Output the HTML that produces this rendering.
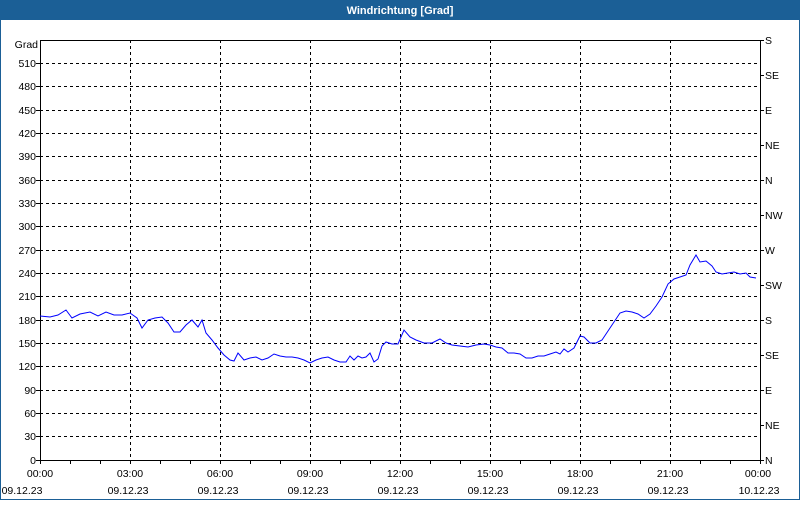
<!DOCTYPE html>
<html><head><style>
body{margin:0;width:800px;height:500px;overflow:hidden;background:#fff;font-family:"Liberation Sans",sans-serif}
</style></head><body>
<svg width="800" height="500" xmlns="http://www.w3.org/2000/svg" font-family="Liberation Sans, sans-serif" font-size="10.5">
<rect x="0" y="0" width="800" height="500" fill="#fff"/>
<rect x="0.5" y="0.5" width="799" height="499" fill="none" stroke="#1b5f96"/>
<rect x="0" y="0" width="800" height="20" fill="#1b5f96"/>
<text x="400" y="14" text-anchor="middle" fill="#fff" font-weight="bold" font-size="11">Windrichtung [Grad]</text>
<g stroke="#000" stroke-dasharray="3,3" stroke-width="1">
<line x1="40" x2="760" y1="63.5" y2="63.5"/><line x1="40" x2="760" y1="86.5" y2="86.5"/><line x1="40" x2="760" y1="110.5" y2="110.5"/><line x1="40" x2="760" y1="133.5" y2="133.5"/><line x1="40" x2="760" y1="156.5" y2="156.5"/><line x1="40" x2="760" y1="180.5" y2="180.5"/><line x1="40" x2="760" y1="203.5" y2="203.5"/><line x1="40" x2="760" y1="226.5" y2="226.5"/><line x1="40" x2="760" y1="250.5" y2="250.5"/><line x1="40" x2="760" y1="273.5" y2="273.5"/><line x1="40" x2="760" y1="296.5" y2="296.5"/><line x1="40" x2="760" y1="320.5" y2="320.5"/><line x1="40" x2="760" y1="343.5" y2="343.5"/><line x1="40" x2="760" y1="366.5" y2="366.5"/><line x1="40" x2="760" y1="390.5" y2="390.5"/><line x1="40" x2="760" y1="413.5" y2="413.5"/><line x1="40" x2="760" y1="436.5" y2="436.5"/>
<line y1="40" y2="460" x1="130.5" x2="130.5"/><line y1="40" y2="460" x1="220.5" x2="220.5"/><line y1="40" y2="460" x1="310.5" x2="310.5"/><line y1="40" y2="460" x1="400.5" x2="400.5"/><line y1="40" y2="460" x1="490.5" x2="490.5"/><line y1="40" y2="460" x1="580.5" x2="580.5"/><line y1="40" y2="460" x1="670.5" x2="670.5"/>
</g>
<rect x="40.5" y="40.5" width="720" height="420" fill="none" stroke="#000"/>
<g stroke="#000">
<path d="M40.5 460v4M70.5 460v4M100.5 460v4M130.5 460v4M160.5 460v4M190.5 460v4M220.5 460v4M250.5 460v4M280.5 460v4M310.5 460v4M340.5 460v4M370.5 460v4M400.5 460v4M430.5 460v4M460.5 460v4M490.5 460v4M520.5 460v4M550.5 460v4M580.5 460v4M610.5 460v4M640.5 460v4M670.5 460v4M700.5 460v4M730.5 460v4M760.5 460v4"/>
<path d="M36 63.5h4M36 86.5h4M36 110.5h4M36 133.5h4M36 156.5h4M36 180.5h4M36 203.5h4M36 226.5h4M36 250.5h4M36 273.5h4M36 296.5h4M36 320.5h4M36 343.5h4M36 366.5h4M36 390.5h4M36 413.5h4M36 436.5h4M36 460.5h4"/>
<path d="M760 40.5h4M760 75.5h4M760 110.5h4M760 145.5h4M760 180.5h4M760 215.5h4M760 250.5h4M760 285.5h4M760 320.5h4M760 355.5h4M760 390.5h4M760 425.5h4M760 460.5h4"/>
</g>
<g text-anchor="end">
<text x="38" y="48">Grad</text>
<text x="36" y="67">510</text><text x="36" y="90">480</text><text x="36" y="114">450</text><text x="36" y="137">420</text><text x="36" y="160">390</text><text x="36" y="184">360</text><text x="36" y="207">330</text><text x="36" y="230">300</text><text x="36" y="254">270</text><text x="36" y="277">240</text><text x="36" y="300">210</text><text x="36" y="324">180</text><text x="36" y="347">150</text><text x="36" y="370">120</text><text x="36" y="394">90</text><text x="36" y="417">60</text><text x="36" y="440">30</text><text x="36" y="464">0</text>
</g>
<g>
<text x="765" y="44">S</text><text x="765" y="79">SE</text><text x="765" y="114">E</text><text x="765" y="149">NE</text><text x="765" y="184">N</text><text x="765" y="219">NW</text><text x="765" y="254">W</text><text x="765" y="289">SW</text><text x="765" y="324">S</text><text x="765" y="359">SE</text><text x="765" y="394">E</text><text x="765" y="429">NE</text><text x="765" y="464">N</text>
</g>
<g text-anchor="middle">
<text x="40" y="477">00:00</text><text x="130" y="477">03:00</text><text x="220" y="477">06:00</text><text x="310" y="477">09:00</text><text x="400" y="477">12:00</text><text x="490" y="477">15:00</text><text x="580" y="477">18:00</text><text x="670" y="477">21:00</text><text x="758" y="477">00:00</text>
<text x="22" y="494">09.12.23</text><text x="128" y="494">09.12.23</text><text x="218" y="494">09.12.23</text><text x="308" y="494">09.12.23</text><text x="398" y="494">09.12.23</text><text x="488" y="494">09.12.23</text><text x="578" y="494">09.12.23</text><text x="668" y="494">09.12.23</text><text x="759" y="494">10.12.23</text>
</g>
<polyline fill="none" stroke="#0000ff" stroke-width="1" points="40,316 50,317 58,315 66,310 72,318 80,314 90,312 98,316 106,312 114,315 122,315 130,313 137,318 142,328 148,320 155,318 162,317 168,323 174,332 180,332 186,325 192,320 198,327 202,320 206,333 212,340 218,348 224,355 230,360 234,361 238,353 244,360 250,358 256,357 262,360 268,358 274,354 280,356 286,357 292,357 298,358 304,360 310,363 316,360 322,358 328,357 334,360 340,362 346,362 350,356 354,360 358,356 362,358 366,357 370,353 374,362 378,359 382,346 386,342 392,344 398,344 404,330 410,337 416,340 424,343 432,343 440,339 446,343 452,345 460,346 468,347 476,345 484,344 490,345 496,347 502,348 508,353 514,353 520,354 526,358 532,358 538,356 544,356 550,354 556,352 560,354 564,349 568,352 574,348 580,336 584,337 590,343 596,343 602,340 608,331 614,322 620,313 626,311 632,312 638,314 644,318 650,314 656,306 662,297 668,284 674,279 680,277 686,275 690,265 696,255 700,262 706,261 712,266 716,272 722,274 728,273 734,272 740,274 746,273 750,277 756,278"/>
</svg>
</body></html>
